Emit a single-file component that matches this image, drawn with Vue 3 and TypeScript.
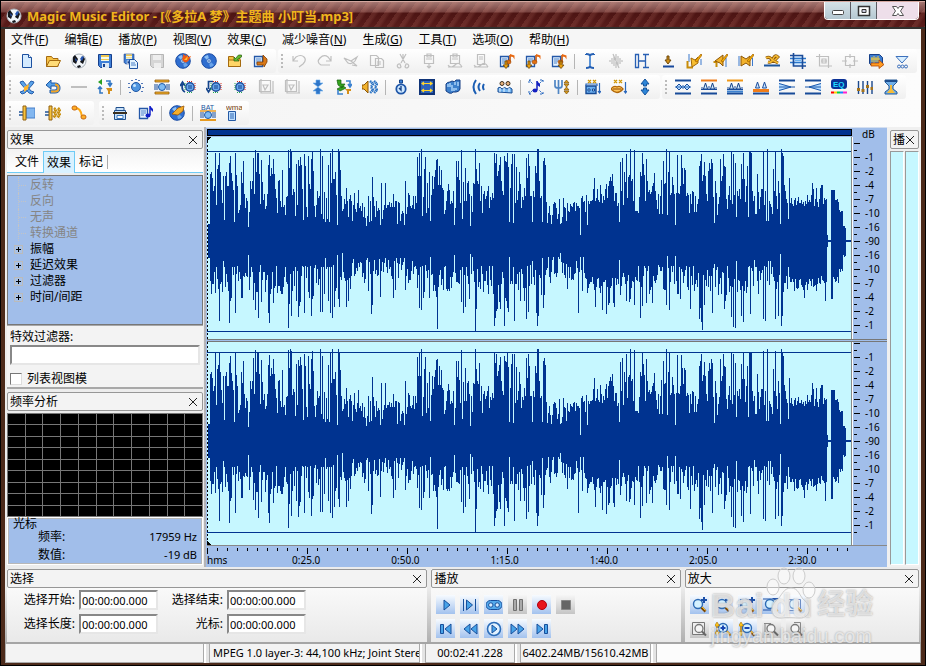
<script setup lang="ts">
import { ref } from 'vue'

type Tool = string

const title = 'Magic Music Editor - [《多拉A 梦》主题曲 小叮当.mp3]'

const menus: [string, string][] = [
  ['文件', 'F'], ['编辑', 'E'], ['播放', 'P'], ['视图', 'V'], ['效果', 'C'],
  ['减少噪音', 'N'], ['生成', 'G'], ['工具', 'T'], ['选项', 'O'], ['帮助', 'H'],
]

const page = '<path d="M3.500 1.500h6l3 3v10h-9z" fill="#d5ebff" stroke="#1c50a0"/>'
const smallPage = '<path d="M1.500 3.500h8v10h-8z" fill="#e6f3ff" stroke="#2458a8" stroke-width="1.300"/><path d="M3 6h5M3 8h5M3 10h3" stroke="#4a80c8"/>'
const note = '<path d="M11 2v7" stroke="#b84800" stroke-width="1.500"/><path d="M11 1l4.500 1.500v4L14 4l-3-.5z" fill="#e86810"/><ellipse cx="9.500" cy="9" rx="2.500" ry="2" fill="#e07010" stroke="#a04404" stroke-width=".6"/>'
const goldDown = (x: number) => `<path d="M${x - 1} 8v4h-2l3 3.500 3-3.500h-2V8z" fill="#e8a010" stroke="#704808" stroke-width=".8"/>`
const disc = '<circle cx="8" cy="8" r="7.300" fill="#2f6ed0" stroke="#1a4ca4"/><path d="M3 4a6.500 6.500 0 0 1 4-2l1 4-2 1z" fill="#8cc0f4"/><path d="M13 12a6 6 0 0 1-4 2L8 10l2-1z" fill="#6aa4ea"/><circle cx="8" cy="8" r="2.300" fill="#c8e4ff" stroke="#3068c0"/><circle cx="8" cy="8" r=".8" fill="#134090"/>'
const floppy = '<path d="M1.500 1.500h13v13h-11l-2-2z" fill="#3f80d8" stroke="#163f8c"/><path d="M4 2h8v6H4z" fill="#f4fbe8"/><path d="M4 2h8v2H4zM4 6h8v1H4z" fill="#f0c850"/><path d="M5 10h7v5H5z" fill="#dce8f4"/><path d="M6 11h2v3H6z" fill="#163f8c"/>'
const folder = '<path d="M1.500 13.500v-10h5l1.500 2h5v8z" fill="#f6c247" stroke="#a46a10"/>'
const sun = '<circle cx="8" cy="8" r="4.500" fill="#4f96e0" stroke="#1d55a4"/><circle cx="6.500" cy="6.500" r="1.500" fill="#c8e8ff"/>'
const clock = (x: number) => `<circle cx="${x}" cy="8" r="4.200" fill="#6aa9ee" stroke="#1d4c9a" stroke-width="1.400"/><path d="M${x - 5} 4v8M${x - 3} 13.500h6" stroke="#20a850" stroke-dasharray="1 1"/><path d="M${x + 5} 4v8M${x - 3} 2.500h6" stroke="#d83020" stroke-dasharray="1 1"/><path d="M${x - 2} 7h4M${x - 2} 9h4" stroke="#144088"/>`
const band = '<path d="M0 8h4M12 8h4M0 6h4M12 6h4M0 10h4M12 10h4" stroke="#174c9c"/><circle cx="8" cy="8" r="3.500" fill="#7ebbf4" stroke="#1c58a8"/>'
const bars = (a: string, b: string) => `<path d="M0 1.500h16" stroke="${a}" stroke-width="2"/><path d="M0 14.500h16" stroke="${b}" stroke-width="2"/>`
const peaks = '<path d="M2.500 10l2-6 2 6zM9.500 10l2-6 2 6z" fill="#d5ecff" stroke="#123e84"/><path d="M0 10.500h16M1 8v2M8 7v3M15 8v2" stroke="#1a4c9c"/>'
const pencil = '<path d="M9 8l6-7 1 1-5 7z" fill="#f4b000" stroke="#a05c00" stroke-width=".7"/>'
const lens = '<circle cx="7" cy="7" r="4.500" fill="#d5f1ff" stroke="#2c6ab4" stroke-width="1.400"/><path d="M10.500 10.500l4 4" stroke="#7a4604" stroke-width="2.500"/><path d="M11 10l3.500 3.500" stroke="#ffc018"/>'
const greyLens = '<circle cx="8" cy="7.500" r="4" fill="#f5f5f5" stroke="#777" stroke-width="1.300"/><path d="M11 10.500l4 4" stroke="#666" stroke-width="2"/>'
const grey = (d: string) => `<path d="${d}" fill="none" stroke="#bfbfbf" stroke-width="1.200"/>`

const icons: Record<string, string> = {
  new: page + '<path d="M9.500 1.500v3h3" fill="#fff" stroke="#1c50a0"/>',
  open: folder + '<path d="M1.500 13.500l3-6h11l-3 6z" fill="#ffdc78" stroke="#a46a10"/>',
  panda: '<circle cx="8" cy="8" r="7" fill="#f2f6fa" stroke="#a8b0b8"/><path d="M2 4l2-2 3 4-2 5-3-2zM12 3l2 3-2 5-3-2zM6 13l3-1 1 2-3 1z" fill="#15171c"/><path d="M9 6l2-3 2 1-2 4z" fill="#2454b0"/><path d="M4 5l2 2-1 2z" fill="#2c5cbc"/>',
  save: floppy,
  saveall: '<g transform="scale(.75)">' + floppy + '</g><path d="M6.500 6.500h5l3 3v6h-8z" fill="#e1f2ff" stroke="#1c50a0"/><path d="M8 10h4M8 12h5" stroke="#4a80c8"/>',
  saveoff: '<path d="M1.500 1.500h13v13h-11l-2-2z" fill="#d6d6d6" stroke="#b5b5b5"/><path d="M4 2h8v5H4zM5 10h7v5H5z" fill="#eee"/>',
  burn: disc + '<path d="M8 8c-2-3 1-4 0-7l3 2 1-2 1 3 3-1-2 4c-2 3-4 3-6 1z" fill="#f05a14"/><path d="M9 7l4-4-1 4z" fill="#ffc030"/>',
  cd: disc,
  folderin: folder + '<path d="M9 6h4.500v7.500H9z" fill="#f6c247"/><path d="M1.500 7h12v6.500h-12z" fill="#ffd566" stroke="#a46a10"/><path d="M7 8V4l1.500 1.500 3-3.500h3v2l-4 2.500L12 8z" fill="#64ba30" stroke="#286010" stroke-width=".7"/>',
  extract: smallPage + '<path d="M4 9h6V2l4 4v3l-3 5v-2H4z" fill="#d87818" stroke="#844004" stroke-width=".8"/>',
  undo: grey('M2 3v5h5M2 8l3-4q5-3 8 0t-1 7l-4 3'),
  redo: grey('M14 3v5H9M14 8l-3-4Q7 1 3 5t1 7h9'),
  bird: grey('M1 5l7 3 6-4-2 4q-3 4-7 2zM8 8l6 5-5-1'),
  copy: grey('M1.500 2.500h6l2 2v8h-8zM6.500 5.500h6l2 2v7h-8zM8 9h4M8 11h4'),
  cut: grey('M5 1l5 9M11 1l-5 9M8 1v7M5 11a2 2 0 1 0 1 3zM11 11a2 2 0 1 1-1 3z'),
  paste: grey('M3.500 2.500h9v8h-9zM6 1h4v3H6zM5 6h6M8 10v5M6 13l2 2 2-2'),
  pastemix: grey('M3.500 2.500h9v8h-9zM6 1h4v3H6zM5 6h6M1 12q3 4 7 0t7 2M1 14h14'),
  pastenew: grey('M4.500 1.500h7v10h-7zM6 4h4M6 6h4M1 12q3 4 7 0t7 2M1 14h14'),
  noteA: smallPage + note + goldDown(7),
  noteB: smallPage + note + goldDown(4),
  noteC: smallPage + note + goldDown(10),
  ibeam: '<path d="M4 1q4 0 4 2v10q0 2-4 2M12 1q-4 0-4 2v10q0 2 4 2M4 1v1M12 1v1" fill="none" stroke="#2560b4" stroke-width="2"/><path d="M8 3v10" stroke="#8ec4f8"/>',
  waveoff: grey('M8 1v14M6 3v10M10 3v10M4 5v6M12 5v6M2 7v2M14 7v2M5 1l6 14'),
  range: '<path d="M1.500 1.500h3v13h-3zM11.500 2v12M9 1.500h6M9 14.500h6M5 8h6" fill="none" stroke="#2860b4" stroke-width="1.300"/>',
  tobase: '<path d="M7 3v4H5l3 4 3-4H9V3z" fill="#d09018" stroke="#704808"/><path d="M3 13.500h11" stroke="#17489c" stroke-width="2"/>',
  trimA: '<path d="M3 1v8M15 6v6" stroke="#3b78cc"/><path d="M1.500 8v6.500H7" fill="none" stroke="#c88c08" stroke-width="2"/><path d="M5 5l4 2 3-3v6l-6 4z" fill="#f8be30" stroke="#a06808"/>' + pencil,
  trimB: '<path d="M14 5v9" stroke="#3b78cc"/><path d="M1.500 9h3v5" fill="none" stroke="#c88c08" stroke-width="2"/><path d="M3 8l4-3 4-3v11l-3-3z" fill="#f2b22c" stroke="#8c5606"/>' + pencil,
  trimC: '<path d="M1 3v10M14.500 5v8" stroke="#3b78cc"/><path d="M3 3l5 3 4-3v10l-4-3-5 3z" fill="#f2b22c" stroke="#8c5606"/>' + pencil,
  smooth: '<path d="M2 5q4-2 6 2l6 3M4 9q4 1 5-3 2-5 5-2l-3 3" fill="none" stroke="#8a560c" stroke-width="3"/><path d="M2 5q4-2 6 2l6 3M4 9q4 1 5-3 2-5 5-2l-3 3" fill="none" stroke="#f4ba30" stroke-width="1.500"/><path d="M0 12.500h16" stroke="#1c559c" stroke-width="2"/>',
  crop: '<path d="M2 3h11v10H2z" fill="#d5ebff"/><path d="M0 5.500h16M0 9.500h16" stroke="#2a76ca" stroke-width="1.500"/><path d="M3.500 0v13H16M12.500 16V2.500H0" fill="none" stroke="#1c4c98" stroke-width="1.600"/><path d="M5 7.500h6" stroke="#68b0f0"/>',
  cropoff: grey('M3.500 1v12H16M12.500 15V3.500H0M6 6h4v4H6zM5 8h6'),
  boxoff: grey('M3.500 3.500h9v9h-9zM0 8h5M11 8h5M8 1v4M8 11v4'),
  send: '<path d="M1.500 1.500h10l3 3v8h-11l-2-2z" fill="#3c7cd0" stroke="#174088"/><path d="M4 4v5M6 3v7M8 4v5M10 3v6M3 6h9" stroke="#f8cc38"/><path d="M3 10h8V7l5 4.500-5 4V13H3z" fill="#ff9b20" stroke="#b04808" stroke-width=".8"/>',
  filter: '<path d="M2 3.500h12L8 10z" fill="#d9efff" stroke="#3c70bc"/><circle cx="5" cy="13.500" r="1.500" fill="none" stroke="#3c70bc"/><circle cx="8.500" cy="13.500" r="1.500" fill="none" stroke="#3c70bc"/><circle cx="12" cy="13.500" r="1.500" fill="none" stroke="#3c70bc"/>',
  cross: '<path d="M1 3l3-1 8 10 3 1-2 2-3-1L2 5zM15 3l-3-1L4 12l-3 1 2 2 3-1 8-9z" fill="#5aa3ea" stroke="#1c54a4" stroke-width=".9"/><path d="M5 8l5-3-1 5-4 3z" fill="#ffb42c"/>',
  turn: '<path d="M1 6l5-5v3h4q5 0 5 5t-5 5H5v-3h5q2 0 2-2t-2-2H6v3z" fill="#55a0e8" stroke="#1f58a4"/><path d="M10 5.500q3.500 0 3.500 3.500t-3.500 3.500H6" fill="none" stroke="#f4a423" stroke-width="2"/>',
  dash: '<path d="M0 8h16" stroke="#bfbfbf" stroke-width="2"/>',
  swap: '<path d="M1 3l4-3v6z" fill="#28a020"/><path d="M9 2h4v3M11 4l2 3 2-3" fill="none" stroke="#3478c4" stroke-width="1.600"/><path d="M3 9v5h3M1 10l2-2 2 2" fill="none" stroke="#3478c4" stroke-width="1.600"/><path d="M9 9h6v3h-2v3h-2v-3z" fill="#d48e18"/>',
  burst: sun + '<path d="M1 4v1M4 1v1M11 1v1M14 4v1M15 8v1M14 12v1M1 8v1M2 13v1M8 0v1" stroke="#1c4fa4" stroke-width="1.500"/>',
  bandgold: '<path d="M1 1h14v2H1zM1 13h14v2H1z" fill="#f4b32e" stroke="#955b08" stroke-width=".8"/>' + band,
  loopup: '<path d="M5 13Q1 11 2.500 5M0 7l2.500-4L5 7" fill="none" stroke="#14448c" stroke-width="1.700"/>' + clock(10),
  loopdn: '<path d="M7 2.500H2.500V10M0 9l2.500 4L5 9" fill="none" stroke="#14448c" stroke-width="1.700"/>' + clock(10),
  gear: clock(8),
  sqoff: grey('M1.500 1.500h11v11h-11zM3 0v14h13M5 6h5l-3 5zM15 2v12'),
  vert: '<path d="M6 1h4v3h3L8 8 3 4h3zM6 15h4v-3h3L8 8l-5 4h3z" fill="#2e75c8" stroke="#6fb0ec" stroke-width=".6"/>',
  swap2: '<path d="M1 1h4v4h4l-3 4-4-3zM1 10l6-3 3 2-6 3z" fill="#36a420" stroke="#156010" stroke-width=".7"/><path d="M10 2h4v5M12 5l2 3 2-3M2 11v4h5" fill="none" stroke="#3b82d0" stroke-width="1.600"/><path d="M9 10h6v2h-2v3h-2v-3z" fill="#d48e18"/>',
  speakwave: '<path d="M0 6h2l4-4v12l-4-4H0z" fill="#f2b22c" stroke="#8c5606"/><path d="M8 2l3 3-2 3 2 3-3 3M12 2l3 3-2 3 2 3-3 3" fill="none" stroke="#2c74c4" stroke-width="2.500" stroke-dasharray="1.500 .5"/>',
  watch: '<circle cx="8" cy="10" r="4.700" fill="#cfe8ff" stroke="#1d55a8" stroke-width="1.800"/><path d="M6.500 1h3v3h-3z" fill="#3d82d8" stroke="#174488"/><path d="M8 7v4l-2-2" fill="none" stroke="#174488" stroke-width="1.400"/>',
  stretch: '<path d="M1 1h14v14H1z" fill="#2c62bc" stroke="#103478" stroke-width="2"/><path d="M4 4.500h9M4 11.500h9M5 3L3 4.500 5 6M11 3l2 1.500L11 6M5 10l-2 1.500L5 13M11 10l2 1.500-2 1.500" fill="none" stroke="#ffd52c" stroke-width="1.200"/>',
  chorus: '<path d="M1 5q1-2 4-2l2-1q3 2 4-1h4v9q-1 3-4 3H8q-1 2-4 1l-3-2z" fill="#3c80cc" stroke="#173f84"/><path d="M3 5v3M5 4v4M9 9v3M11 9v2M10 3v3M13 3v4M7 6v6" stroke="#b9deff" stroke-width="1.300"/>',
  echo: '<path d="M5 1Q0 8 5 15M9 4q-3 4 0 8M13 5q-2 3 0 6" fill="none" stroke="#1b5eb4" stroke-width="2"/>',
  crowd: '<circle cx="5" cy="4.500" r="2" fill="#e8b27c" stroke="#3e3020"/><circle cx="11" cy="4.500" r="2" fill="#e8b27c" stroke="#3e3020"/><path d="M1 13V9q2-2 4 1 3-3 5 0 3-3 5 0v4z" fill="#76b7f2" stroke="#174c94"/><path d="M3 9v4M7 9v4M12 9v4" stroke="#e8f5ff"/>',
  notefit: '<path d="M1 4V1h3M12 1h3v3M1 12v3h3M12 15h3v-3M1 1l4 4M15 1l-4 4M1 15l4-4M15 15l-4-4" fill="none" stroke="#2868c0" stroke-dasharray="2 1"/><path d="M9 2v9" stroke="#1420c0" stroke-width="1.500"/><path d="M9 2l3 3v3L9 6z" fill="#1420c0"/><ellipse cx="7" cy="11.500" rx="2.500" ry="2" fill="#1420c0"/>',
  fork: '<path d="M1 1v6q0 2 3.500 2T8 7V1M4.500 1v14" fill="none" stroke="#5086c4" stroke-width="1.700"/><path d="M10 4h5l-2.500-3zM10 5h5l-2.500 3zM10 11h5l-2.500-3zM10 12h5l-2.500 3z" fill="#e0a21c" stroke="#7c5008" stroke-width=".7"/>',
  radio: '<path d="M1 7h10v7.500H1z" fill="#6db0f0" stroke="#164a94" stroke-width="1.400"/><path d="M3 10h2v2H3zM7.500 10h2v2h-2z" fill="#e8f7ff" stroke="#164a94"/><path d="M1 7V5h11v2M14.500 4v9M13 12l1.500 2 1.500-2" fill="none" stroke="#2b68bc" stroke-width="1.200"/><path d="M3 1l3 3M6 1L3 4M8 1l3 3M11 1L8 4" fill="none" stroke="#d09808" stroke-width="1.300"/>',
  lips: '<path d="M0 10q3-4 6-2 3-2 6 2-6 7-12 0z" fill="#ffc457" stroke="#b0680c" stroke-width="1.300"/><path d="M2 10h8" stroke="#8d4808"/><path d="M14.500 3v10M13 12l1.500 2 1.500-2" fill="none" stroke="#2b68bc" stroke-width="1.200"/><path d="M3 1l3 3M6 1L3 4M8 1l3 3M11 1L8 4" fill="none" stroke="#d09808" stroke-width="1.300"/>',
  updown: '<path d="M8 0l4 5H9.500v2h-3V5H4zM8 16l4-5H9.500V9h-3v2H4z" fill="#2d85d8" stroke="#17549c"/>',
  wdiamond: bars('#174a98', '#174a98') + '<path d="M1 8l3-3 3 3-3 3zM9 8l3-3 3 3-3 3z" fill="#b5dbff" stroke="#1b4d9c"/><path d="M0 8h16M8 6v4" stroke="#2b69b8"/>',
  wtop: bars('#f07c18', '#174a98') + peaks,
  wmid: bars('#f09818', '#174a98') + peaks + '<path d="M0 12.500h16" stroke="#3e82d0" stroke-width="2"/>',
  wlow: '<path d="M0 14.500h16" stroke="#174a98" stroke-width="2"/><path d="M0 11.500h16" stroke="#f07c18" stroke-width="3"/><path d="M2.500 9l2-6 2 6zM9.500 9l2-6 2 6z" fill="#d0e8ff" stroke="#1a4c9c"/>',
  fadeout: bars('#174a98', '#174a98') + '<path d="M0 4l12 4-12 4z" fill="#b5dbff"/><path d="M0 4.500l12 3.500-12 3.500M0 8h16" fill="none" stroke="#1b58ac"/>',
  fadein: bars('#174a98', '#174a98') + '<path d="M16 4L4 8l12 4z" fill="#b5dbff"/><path d="M16 4.500L4 8l12 3.500M16 8H0" fill="none" stroke="#1b58ac"/>',
  eq: '<rect x="0" y="0" width="16" height="10" rx="3" fill="#0b3296"/><text x="2" y="8" font-family="Liberation Sans" font-size="8" font-weight="700" fill="#21dcff">EQ</text><path d="M0 13.500h3" stroke="red" stroke-width="2"/><path d="M3 13.500h3" stroke="#fc0" stroke-width="2"/><path d="M6 13.500h3" stroke="#0c4" stroke-width="2"/><path d="M9 13.500h3" stroke="#18f" stroke-width="2"/><path d="M12 13.500h4" stroke="#f2c" stroke-width="2"/>',
  sliders: '<path d="M1.500 2v13M6 2v13M10.500 2v13M15 2v13" stroke="#1b488c" stroke-width="1.400"/><path d="M0 9h3v3H0zM4.500 10h3v3h-3zM9 6h3v3H9zM13.500 8H16v3h-2.500z" fill="#a4731c"/>',
  hour: '<path d="M2 1h12v2l-4 4v3l4 3v2H2v-2l4-3V7L2 3z" fill="#70afe8" stroke="#285c98"/><path d="M7 6h2v4l3 4H4l3-4z" fill="#f6bc38"/><path d="M2 2h12" stroke="#1c4c8c" stroke-width="2"/>',
  insertA: '<path d="M7 3h9v10H7z" fill="#83b7f0" stroke="#477fc8"/><path d="M0 7h4M0 10h4" stroke="#205498" stroke-width="1.500"/><path d="M4 1h3v14H4z" fill="#f7c33c" stroke="#916010"/>',
  insertB: '<path d="M9 3l2 2-2 2 2 2-2 2 2 2M13 3l2 2-2 2 2 2-2 2 2 2" fill="none" stroke="#c89010" stroke-width="2.500" stroke-dasharray="2 .8"/><path d="M0 7h4M0 10h4" stroke="#205498" stroke-width="1.500"/><path d="M4 1h3v14H4z" fill="#f7c33c" stroke="#916010"/>',
  curve: '<path d="M3 3q7-1 8 9" fill="none" stroke="#ffab16" stroke-width="2"/><rect x="1" y="1" width="5" height="4" rx="2" fill="#ffae26" stroke="#c56812"/><rect x="10" y="10" width="5" height="4" rx="2" fill="#ffae26" stroke="#c56812"/>',
  case: '<path d="M4 6V2.500h8V6M2.500 5.500h11v9h-11z" fill="#c9e2fa" stroke="#1f4f8c"/><path d="M1 8h14" stroke="#3d3120" stroke-width="2"/><path d="M5 10.500h6v3H5z" fill="#fff" stroke="#3a77bd"/>',
  pagenote: smallPage + '<path d="M12 1v9" stroke="#111fc8" stroke-width="1.500"/><path d="M12 1l3 3v3l-3-3z" fill="#111fc8"/><ellipse cx="10" cy="10.500" rx="2.500" ry="2" fill="#111fc8"/>',
  discedit: disc + '<path d="M3 9l6-6 6-2-1 5-5 4z" fill="#f6ae2a" stroke="#9a5808" stroke-width=".8"/>',
  bat: '<text x="1" y="5" font-family="Liberation Sans" font-size="7" fill="#20539c">BAT</text><path d="M0 6h16" stroke="#e89b20" stroke-width="1.500"/><g transform="translate(0 2)">' + band + '</g><path d="M0 15h16" stroke="#e89b20" stroke-width="2"/>',
  wma: '<path d="M2.500 6.500h7v9h-7z" fill="#bfdfff" stroke="#2459a4"/><path d="M4 9h4M4 11h4M4 13h4" stroke="#2b65b2"/><text x="0" y="5" font-family="Liberation Sans" font-size="8" fill="#77430c">wma</text>',
}

const toolbars: { wide?: boolean; groups: Tool[][] }[] = [
  { groups: [
    'new open panda save saveall saveoff burn cd folderin extract'.split(' '),
    'undo redo bird copy cut paste pastemix pastenew noteA noteB noteC | ibeam waveoff range tobase trimA trimB trimC smooth crop cropoff boxoff send filter'.split(' '),
  ] },
  { groups: [
    'cross turn dash swap | burst bandgold loopup loopdn gear sqoff sqoff vert swap2 speakwave | watch stretch chorus echo crowd | notefit fork | radio lips updown'.split(' '),
    'wdiamond wtop wmid wlow fadeout fadein eq sliders hour'.split(' '),
  ] },
  { wide: true, groups: [
    'insertA insertB curve'.split(' '),
    'case pagenote | discedit | bat wma'.split(' '),
  ] },
]

const tree: { label: string; branch: boolean }[] = [
  { label: '反转', branch: false }, { label: '反向', branch: false },
  { label: '无声', branch: false }, { label: '转换通道', branch: false },
  { label: '振幅', branch: true }, { label: '延迟效果', branch: true },
  { label: '过滤器', branch: true }, { label: '时间/间距', branch: true },
]

const blue = (d: string) => `<path d="${d}" fill="#48a3e8" stroke="#174f9c"/>`
const playRows: { name: string; off?: boolean; art: string }[][] = [
  [
    { name: '播放', art: blue('M6 3l6 5-6 5z') },
    { name: '播放选区', art: blue('M1.500 2v12M4.500 3l6 5-6 5zM13.500 2v12') },
    { name: '循环', art: '<rect x="0" y="3.500" width="16" height="9" rx="4.500" fill="#55aaec" stroke="#174f9c"/><circle cx="4.800" cy="8" r="2.200" fill="#d7edff" stroke="#174f9c"/><circle cx="11.200" cy="8" r="2.200" fill="#d7edff" stroke="#174f9c"/>' },
    { name: '暂停', off: true, art: '<path d="M3.500 2.500h3v11h-3zM9.500 2.500h3v11h-3z" fill="#aaa" stroke="#707070"/>' },
    { name: '录音', art: '<circle cx="8" cy="8" r="4.500" fill="#e8141c" stroke="#b00010"/>' },
    { name: '停止', off: true, art: '<path d="M3.500 3.500h9v9h-9z" fill="#666" stroke="#888"/>' },
  ],
  [
    { name: '开头', art: blue('M2.500 3.500h3v9h-3zM13 3v10L7 8z') },
    { name: '快退', art: blue('M8 3v10L2 8zM15 3v10L9 8z') },
    { name: '播放全部', art: '<circle cx="8" cy="8" r="6.500" fill="#e2f2ff" stroke="#2b6cb8" stroke-width="1.600"/>' + blue('M6 4l5 4-5 4z') },
    { name: '快进', art: blue('M1 3v10l6-5zM8 3v10l6-5z') },
    { name: '结尾', art: blue('M3 3v10l6-5zM10.500 3.500h3v9h-3z') },
  ],
]

const zoomRows: { name: string; off?: boolean; art: string }[][] = [
  [
    { name: '放大', art: lens + '<path d="M13 0v6M10 3h6" stroke="#1d50a8" stroke-width="2"/>' },
    { name: '缩小', art: lens + '<path d="M10 3h6" stroke="#1d50a8" stroke-width="2"/>' },
    { name: '放大选区', art: '<path d="M1.500 2v11M1 2.500h8" fill="none" stroke="#1d50a8"/>' + lens + '<path d="M13 0v6M10 3h6" stroke="#1d50a8" stroke-width="2"/>' },
    { name: '全部', art: '<path d="M0 2h16M0 13h8" stroke="#1d50a8"/>' + lens + '<path d="M9 1h7l-3.500 3z" fill="#1d50a8"/>' },
    { name: '选区', art: '<path d="M1.500 2.500h12v11h-12z" fill="#d6eaff" stroke="#1d50a8"/>' + lens },
  ],
  [
    { name: '还原', off: true, art: '<path d="M1.500 1.500h12v12h-12z" fill="#eee" stroke="#777"/>' + greyLens },
    { name: '垂直放大', art: '<g transform="translate(1 0)">' + lens + '</g><path d="M8 4.500v5M5.500 7h5" stroke="#1846b4" stroke-width="2"/><path d="M2 1l2.500 4h-2v6h2L2 15l-2.500-4h2V5h-2z" fill="#ffc818" stroke="#a66c08" stroke-width=".6"/>' },
    { name: '垂直缩小', art: '<g transform="translate(1 0)">' + lens + '</g><path d="M5.500 7h5" stroke="#1846b4" stroke-width="2"/><path d="M2 1l2.500 4h-2v6h2L2 15l-2.500-4h2V5h-2z" fill="#ffc818" stroke="#a66c08" stroke-width=".6"/>' },
    { name: '左端', off: true, art: '<path d="M1 2.500h7M1 13.500h5M2 2v11" stroke="#888"/>' + greyLens },
    { name: '右端', off: true, art: '<path d="M7 1.500h6.500v12H7" fill="none" stroke="#888"/>' + greyLens },
  ],
]

const fields = ref([
  { id: 'sel-start', label: '选择开始:', value: '00:00:00.000' },
  { id: 'sel-end', label: '选择结束:', value: '00:00:00.000' },
  { id: 'sel-length', label: '选择长度:', value: '00:00:00.000' },
  { id: 'sel-cursor', label: '光标:', value: '00:00:00.000' },
])
const filterText = ref('')
const listView = ref(false)

/* Peak heights above the centre line, as column:height */
const upper = `3:67 4:69 5:63 6:50 7:55 8:88 9:36 10:72 11:76 12:88 13:69 14:51 15:38 16:65 17:21 18:65 19:69 20:55 21:55 22:78 23:85 24:68 25:60 26:51 27:19 28:88 29:66 30:55 31:28 32:31 33:36 34:69 35:58 36:80 37:47 38:33 39:43 40:40 41:14 43:60 44:52 45:60 46:83 47:47 48:91 49:69 50:88 51:88 52:67 53:37 54:81 55:59 56:41 58:32 59:35 60:47 61:76 62:86 63:65 64:73 65:67 66:82 67:67 68:52 69:43 70:28 71:60 72:61 73:40 74:34 75:71 76:34 77:36 78:26 79:44 80:45 81:91 82:73 83:92 84:90 85:46 86:52 87:49 88:25 89:77 90:36 91:81 92:75 93:84 94:76 95:52 96:21 97:87 98:75 99:34 100:24 101:85 102:57 103:52 104:82 105:90 106:70 107:35 108:24 109:36 110:50 111:43 112:45 113:92 114:27 115:85 116:22 117:49 118:19 119:43 120:22 121:76 122:19 123:88 124:58 125:92 126:62 127:62 128:69 129:46 130:16 131:92 132:89 133:71 134:45 137:42 139:53 142:42 143:46 147:48 151:51 153:35 157:34 161:45 165:64 166:44 174:58 178:58 183:34 186:47 188:40 192:38 195:30 198:60 201:48 202:46 206:45 208:45 210:84 211:65 212:88 213:65 214:92 215:25 217:72 218:84 219:28 220:58 221:33 222:69 223:20 225:65 226:52 227:64 228:71 229:81 230:82 231:56 232:75 233:56 234:71 235:53 236:51 240:50 241:57 242:51 244:40 246:50 247:16 249:80 250:64 251:80 252:61 253:38 254:91 255:22 256:59 257:40 258:73 259:40 260:58 261:60 262:47 263:15 264:45 266:58 267:57 268:92 269:72 270:60 271:57 272:78 273:40 274:55 277:50 278:42 280:50 281:55 285:48 287:88 288:78 289:87 290:65 291:70 292:76 293:84 294:60 295:50 296:46 297:85 298:80 299:79 300:88 301:74 302:19 303:53 304:77 305:87 306:18 307:87 308:38 309:74 310:41 311:50 312:69 313:57 317:53 318:45 319:83 320:63 321:87 322:51 323:75 325:45 326:19 327:50 329:75 330:68 331:92 332:92 333:60 335:45 336:19 337:80 338:83 339:76 340:39 343:35 353:42 357:43 361:38 365:35 367:38 371:35 374:6 375:43 376:45 380:46 384:40 387:52 388:63 389:40 391:52 394:56 397:45 399:52 400:57 402:55 403:60 404:64 405:60 406:67 407:55 409:48 410:48 411:35 413:19 414:79 415:50 416:83 417:36 418:69 419:59 420:87 421:43 422:64 423:66 424:92 425:60 426:62 427:40 428:91 429:30 434:69 435:65 436:88 437:77 438:66 439:40 440:82 441:60 442:49 443:51 446:55 447:58 448:68 449:50 451:32 453:27 454:45 455:61 457:80 458:57 459:58 460:92 461:26 462:69 463:89 464:46 466:64 467:56 469:16 470:48 471:86 472:48 474:55 475:86 476:73 477:57 478:73 479:71 480:45 482:46 484:47 486:50 489:45 493:75 494:80 495:87 496:60 497:66 498:79 499:65 500:47 502:70 503:78 504:72 505:82 506:78 508:18 509:60 510:48 513:44 514:82 515:60 516:65 517:87 518:75 519:74 520:42 523:55 525:89 526:37 527:87 528:46 529:78 530:24 531:50 533:52 535:77 536:62 537:88 538:62 539:39 540:55 541:75 542:24 543:89 544:89 545:88 546:50 548:45 551:67 553:32 555:52 556:52 557:90 558:36 559:50 560:20 561:92 562:20 563:40 567:72 568:50 569:90 570:45 572:60 573:48 574:17 575:92 576:88 577:85 578:56 579:50 580:42 582:22 583:63 592:44 597:39 601:46 605:46 606:58 607:52 610:53 614:53 615:56 616:56 618:43`
/* Peak depths below the centre line, as column:depth */
const lower = `2:52 4:53 5:43 8:52 12:80 13:43 16:20 17:38 18:46 22:82 23:60 24:57 28:72 30:25 34:57 35:57 36:35 41:14 46:59 48:69 51:77 54:61 60:34 61:72 62:82 64:48 66:62 72:45 75:53 81:87 82:63 84:75 87:45 89:60 91:76 92:65 93:61 97:72 98:25 102:57 104:75 105:58 106:55 109:42 113:71 115:71 118:17 121:60 123:72 125:77 127:66 128:50 130:14 131:58 132:66 135:12 139:66 141:60 143:48 157:42 161:50 164:73 165:64 173:56 186:57 188:49 198:49 201:42 210:47 212:67 214:69 216:57 222:57 223:16 229:56 230:88 231:46 242:50 247:14 254:61 256:72 258:66 262:58 263:13 265:16 268:91 269:68 273:48 287:85 288:77 289:70 290:68 292:61 293:68 297:85 298:57 299:60 300:67 301:71 302:16 307:80 313:60 317:60 319:78 321:71 326:20 330:72 331:85 332:75 336:17 337:67 338:54 344:42 354:12 361:48 372:72 374:16 376:50 381:52 389:66 396:69 400:73 402:64 403:62 407:62 408:66 413:19 414:54 420:60 423:61 424:58 428:64 434:77 436:65 440:62 446:62 457:48 460:64 461:15 463:69 469:15 474:58 484:68 493:78 494:67 495:81 496:89 498:64 506:72 508:23 518:68 519:60 525:76 527:86 529:87 530:20 535:75 537:81 544:73 548:19 557:78 559:80 562:20 564:20 569:78 572:75 574:13 575:85 576:75 588:50 598:57 610:50 619:60 621:45`

const columns = 645
const parse = (source: string): Map<number, number> =>
  new Map(source.split(' ').map((pair) => pair.split(':').map(Number) as [number, number]))

function waveform(centre: number): string {
  const up = parse(upper)
  const down = parse(lower)
  let seed = 7
  const random = () => (seed = (seed * 16807) % 2147483647) / 2147483647
  let d = ''
  for (let x = 1; x < columns; x++) {
    const quiet = (x > 134 && x < 209) || (x > 339 && x < 382)
    const rising = x > 381 && x < 412
    const tail = x > 578
    const a = random()
    const b = random()
    let top = up.get(x) ?? (tail ? 34 + a * 9 : rising ? 36 + a * 12 : quiet ? 15 + a * 26 : 26 + a * 24)
    let bottom = down.get(x) ?? (tail ? 35 + b * 14 : rising ? 36 + b * 16 : quiet ? 16 + b * 24 : 24 + b * 30)
    if (top < 28 && !quiet) bottom = Math.min(bottom, 26)
    if (x < 3) top = bottom = 17
    if (x > 620 && x < 625) top = bottom = x < 622 ? 6 : 1
    if (x > 624) {
      const fade = x < 633 ? 1 : x < 637 ? 0.75 : x < 640 ? 0.35 : 0
      top = fade * (x < 629 ? 50 : 34 + a * 8) + 1
      bottom = fade * (x < 627 ? 57 : 34 + b * 8) + 1
    }
    d += `M${x} ${centre - Math.round(top)}h1V${centre + Math.round(bottom)}h-1z`
  }
  return d
}

const channels = [
  { id: 'left', height: 202, centre: 104, ceiling: 14, floor: 194, start: 6 },
  { id: 'right', height: 203, centre: 99, ceiling: 10, floor: 190, start: 1 },
].map((c) => ({
  ...c,
  wave: waveform(c.centre),
  ticks: Array.from({ length: 28 }, (_, i) => `M0 ${c.start + i * 7}h${i % 2 ? 3 : 6}v1H0z`).join(''),
}))
const levels = [-1, -2, -4, -7, -10, -16, -90, -16, -10, -7, -4, -2, -1]

const timeTicks = Array.from({ length: 65 }, (_, i) => `M${i * 10} 2h1v${i % 10 ? 3 : 6}h-1z`).join('')
const times = ['0:25.0', '0:50.0', '1:15.0', '1:40.0', '2:05.0', '2:30.0']
</script>

<template>
  <div class="window">
    <header class="titlebar">
      <svg class="logo" viewBox="0 0 16 16" v-html="icons.panda"></svg>
      <h1>{{ title }}</h1>
      <div class="controls">
        <button type="button" aria-label="最小化"><svg viewBox="0 0 14 12"><rect x="1.500" y="5.500" width="11" height="4" rx="1" fill="#fff" stroke="#444" /></svg></button>
        <button type="button" aria-label="最大化"><svg viewBox="0 0 14 12"><path d="M1.500 1.500h11v9h-11z" fill="#fff" stroke="#333" stroke-width="1.500" /><path d="M5 4.500h4v3H5z" fill="#ccd" stroke="#333" /></svg></button>
        <button type="button" class="close" aria-label="关闭"><svg viewBox="0 0 14 12"><path d="M1.500 1.500h4L7 3.500l1.500-2h4L9.500 6l3 4.500h-4L7 8.500l-1.500 2h-4l3-4.500z" fill="#fff" stroke="#555" /></svg></button>
      </div>
    </header>

    <nav class="menubar">
      <button v-for="[name, key] in menus" :key="key" type="button">{{ name }}(<u>{{ key }}</u>)</button>
    </nav>

    <div class="toolbars">
      <div v-for="(bar, r) in toolbars" :key="r" class="bar" :class="{ wide: bar.wide }">
        <div v-for="(group, g) in bar.groups" :key="g" class="group">
          <i class="grip"></i>
          <template v-for="(tool, t) in group" :key="t">
            <i v-if="tool === '|'" class="sep"></i>
            <button v-else type="button" class="tool" :aria-label="tool">
              <svg viewBox="0 0 16 16" v-html="icons[tool]"></svg>
            </button>
          </template>
        </div>
      </div>
    </div>

    <main class="workspace">
      <aside class="side">
        <div class="head"><span>效果</span><button type="button" aria-label="关闭效果"></button></div>
        <div class="tabs">
          <button type="button">文件</button>
          <button type="button" class="active">效果</button>
          <button type="button">标记</button>
          <i></i>
        </div>
        <ul class="tree">
          <li v-for="node in tree" :key="node.label" :class="{ branch: node.branch }">
            <i></i><span>{{ node.label }}</span>
          </li>
        </ul>
        <div class="filter">
          <label for="fx-filter">特效过滤器:</label>
          <input id="fx-filter" v-model="filterText" type="text" />
          <label class="check"><input v-model="listView" type="checkbox" />列表视图模</label>
        </div>
        <div class="head second"><span>频率分析</span><button type="button" aria-label="关闭频率分析"></button></div>
        <div class="spectrum"><i v-for="n in 99" :key="n"></i></div>
        <fieldset class="cursor">
          <legend>光标</legend>
          <dl><dt>频率:</dt><dd>17959 Hz</dd><dt>数值:</dt><dd>-19 dB</dd></dl>
        </fieldset>
      </aside>

      <section class="editor">
        <div class="top"><div class="overview"></div><span>dB</span></div>
        <div v-for="c in channels" :key="c.id" class="channel" :class="c.id">
          <svg class="wave" :viewBox="`0 0 645 ${c.height}`" preserveAspectRatio="none" shape-rendering="crispEdges">
            <path :d="`M0 ${c.ceiling}h645v1H0zM0 ${c.floor}h645v1H0z`" fill="#003390" />
            <path :d="c.wave" fill="#003390" />
            <path :d="`M.5 0v${c.height}`" stroke="#000" stroke-dasharray="2 2" />
            <path :d="c.id === 'left' ? 'M0 0h5L0 5z' : 'M0 203h5l-5-5z'" fill="#000" />
          </svg>
          <div class="scale">
            <svg :viewBox="`0 0 6 ${c.height}`" preserveAspectRatio="none" shape-rendering="crispEdges"><path :d="c.ticks" /></svg>
            <ol><li v-for="(level, i) in levels" :key="i">{{ level }}</li></ol>
          </div>
        </div>
        <div class="ruler">
          <svg viewBox="0 0 645 9" preserveAspectRatio="none" shape-rendering="crispEdges"><path :d="timeTicks" /></svg>
          <div class="times"><span>hms</span><span v-for="time in times" :key="time">{{ time }}</span></div>
        </div>
      </section>

      <aside class="meters">
        <div class="head"><span>播</span><button type="button" aria-label="关闭电平"></button></div>
        <div class="levels"><i></i><i></i></div>
      </aside>
    </main>

    <section class="dock">
      <div class="panel">
        <div class="head"><span>选择</span><button type="button" aria-label="关闭选择"></button></div>
        <form class="fields">
          <template v-for="field in fields" :key="field.id">
            <label :for="field.id">{{ field.label }}</label>
            <input :id="field.id" v-model="field.value" type="text" />
          </template>
        </form>
      </div>
      <div class="panel">
        <div class="head"><span>播放</span><button type="button" aria-label="关闭播放"></button></div>
        <div class="pads">
          <div v-for="(row, r) in playRows" :key="r">
            <button v-for="b in row" :key="b.name" type="button" :class="{ off: b.off }" :aria-label="b.name"><svg viewBox="0 0 16 16" v-html="b.art"></svg></button>
          </div>
        </div>
      </div>
      <div class="panel">
        <div class="head"><span>放大</span><button type="button" aria-label="关闭放大"></button></div>
        <div class="pads">
          <div v-for="(row, r) in zoomRows" :key="r">
            <button v-for="b in row" :key="b.name" type="button" :class="{ off: b.off }" :aria-label="b.name"><svg viewBox="0 0 16 16" v-html="b.art"></svg></button>
          </div>
        </div>
        <div class="brand">
          <svg viewBox="0 0 50 54">
            <ellipse cx="18" cy="9" rx="6" ry="8" /><ellipse cx="33" cy="9" rx="6" ry="8" />
            <ellipse cx="7" cy="20" rx="6" ry="8" /><ellipse cx="43" cy="23" rx="6" ry="8" />
            <path d="M25 21c8 0 8 8 14 13 7 6 5 17-5 17-5 0-13-1-18 0-11 1-13-11-6-17 6-5 7-13 15-13z" />
          </svg>
          <div class="name"><b>Bai</b><b class="du">du</b><b class="cn">经验</b></div>
          <div class="site">jingyan.baidu.com</div>
        </div>
      </div>
    </section>

    <footer class="status">
      <span class="hint"></span><i></i>
      <span class="format">MPEG 1.0 layer-3: 44,100 kHz; Joint Stereo</span><i></i>
      <span class="length">00:02:41.228</span><i></i>
      <span class="disk">6402.24MB/15610.42MB</span><i></i>
      <span class="rest"></span>
    </footer>
  </div>
</template>

<style>
body { margin: 0; }
</style>

<style scoped>
* { box-sizing: border-box; }
button, input { font: inherit; color: inherit; margin: 0; padding: 0; border: 0; background: none; border-radius: 0; }
ul, ol, dl, dd { margin: 0; padding: 0; list-style: none; }
svg { display: block; }
.window {
  min-height: 100vh; display: flex; flex-direction: column;
  border: 1px solid #000; padding: 0 4px 2px; background: #4c2a1a;
  font-family: "Noto Sans", "Noto Sans CJK SC", sans-serif; font-size: 12px; line-height: 16px; color: #000;
}
.titlebar {
  display: flex; align-items: flex-start; height: 28px; margin: 0 -4px; padding: 0 6px 0 5px;
  border-top: 1px solid #d4a8a0; border-bottom: 2px solid #32302e;
  background:
    repeating-linear-gradient(125deg, rgba(255,170,150,.12) 0 3px, transparent 6px 10px),
    linear-gradient(#a27570 0, #78423f 10px, #4c1413 11px, #5a1d1b 100%);
}
.logo { width: 16px; height: 16px; margin-top: 6px; }
h1 { flex: 1; margin: 5px 0 0 5px; font-size: 13px; line-height: 18px; font-weight: 700; color: #f0b51c; white-space: nowrap; }
.controls { display: flex; width: 95px; height: 18px; border: 1px solid #fff; border-top: 0; border-radius: 0 0 4px 4px; overflow: hidden; }
.controls button { flex: 26; display: grid; place-items: center; background: linear-gradient(#d5e2e8, #b5c8d1); border-right: 1px solid #5b5b62; }
.controls .close { flex: 42; border-right: 0; background: #eedfea; }
.controls svg { width: 14px; height: 12px; }
.menubar { display: flex; gap: 16px; height: 20px; padding: 1px 0 0 6px; background: #f6f6f6; }
.menubar button { line-height: 19px; white-space: nowrap; }
.toolbars { display: flex; flex-direction: column; gap: 2px; height: 78px; padding: 0 1px; background: linear-gradient(90deg, #f3f3f3, #fcfcfc); }
.bar { display: flex; gap: 2px; }
.bar.wide { gap: 5px; }
.group { display: flex; align-items: center; height: 24px; padding: 0 2px 0 3px; border-radius: 3px; background: linear-gradient(#fff, #f0f0f0); }
.grip { width: 2px; height: 14px; margin-right: 3px; background: repeating-linear-gradient(#bbb 0 2px, transparent 2px 4px); }
.sep { width: 1px; height: 15px; margin: 0 2px; background: #b5b5b5; }
.tool { width: 26px; height: 24px; display: grid; place-items: center; }
.tool svg { width: 16px; height: 16px; }

.workspace { flex: 1; display: grid; grid-template-columns: 201px 1fr 34px; background: #ececec; }
.head {
  display: flex; justify-content: space-between; align-items: center; height: 19px; padding: 0 5px 0 2px;
  border: 1px solid #969696; border-radius: 2px; background: #f3f3f3; white-space: nowrap;
}
.head button {
  width: 8px; height: 8px;
  background:
    linear-gradient(45deg, transparent 45%, #222 46% 54%, transparent 55%),
    linear-gradient(-45deg, transparent 45%, #222 46% 54%, transparent 55%);
}
.side { display: flex; flex-direction: column; padding: 3px 1px 2px 2px; border-right: 2px solid #b4b4b8; }
.tabs { display: flex; height: 24px; padding: 2px 0 0 4px; border-bottom: 1px solid #6fcbf5; background: linear-gradient(#f3f3f3, #fff); }
.tabs button { width: 32px; line-height: 20px; }
.tabs .active { margin-bottom: -1px; border: 1px solid #6fcbf5; border-bottom: 0; background: #d8f1ff; }
.tabs i { width: 1px; height: 14px; margin-top: 4px; background: #aaa; }
.tree { flex: 1; margin-top: 2px; padding: 1px 0 0 6px; border: 1px solid #777; background: #a1beea; }
.tree li { display: flex; align-items: center; height: 16px; color: #858585; }
.tree i { width: 8px; height: 16px; margin: 0 4px; border-left: 1px dotted #c4c4c4; background: linear-gradient(90deg, #c4c4c4 50%, transparent 50%) 0 8px / 2px 1px repeat-x; }
.tree .branch { color: #000; }
.tree .branch i {
  width: 9px; height: 9px; margin: 0 7px 0 0; border: 1px solid #bbb;
  background: linear-gradient(#000, #000) center / 5px 1px no-repeat, linear-gradient(#000, #000) center / 1px 5px no-repeat, #a8c2e8;
}
.tree span { white-space: nowrap; }
.filter { display: flex; flex-direction: column; height: 64px; padding: 3px 3px 0; border: solid #a8a8a8; border-width: 1px 0 2px; background: #f3f3f3; }
input[type="text"] { height: 20px; padding: 0 0 0 1px; border: 2px solid; border-color: #888 #e6e6e6 #e6e6e6 #888; background: #fff; font-size: 11px; }
.check { display: flex; align-items: center; gap: 5px; margin-top: 6px; }
.check input { appearance: none; width: 12px; height: 12px; border: 1px solid; border-color: #777 #ddd #ddd #777; background: #fff; }
.second { margin: 3px 0 2px; flex: none; }
.spectrum { display: grid; grid-template-columns: repeat(11, 1fr); grid-template-rows: repeat(9, 1fr); gap: 1px; height: 104px; padding: 1px; background: #777; }
.spectrum i { background: #000; }
.cursor { min-width: 0; height: 48px; margin: 0; padding: 0 6px; border: 0; background: #a1beea; box-shadow: inset 0 0 0 1px #fff, inset 0 0 0 2px #b8b8b8; }
.cursor legend { float: left; width: 100%; height: 11px; padding: 0; line-height: 14px; }
.cursor dl { clear: both; display: grid; grid-template-columns: 1fr 1fr; padding-left: 25px; line-height: 18px; }
.cursor dd { text-align: right; font-size: 11px; }

.editor { display: flex; flex-direction: column; padding-left: 1px; background: #a1beea; border-top: 1px solid #d4dff0; min-width: 0; }
.top { display: grid; grid-template-columns: 1fr 35px; height: 9px; padding-top: 1px; }
.overview { height: 7px; background: #003390; border: 1px solid #000; }
.top span { padding-left: 10px; font-size: 10px; line-height: 10px; }
.channel { display: grid; grid-template-columns: 1fr 35px; min-height: 0; }
.channel.left { flex: 202 1 0; border-bottom: 3px double #777; }
.channel.right { flex: 203 1 0; }
.wave { width: 100%; height: 100%; min-height: 0; background: #c6f7ff; border-right: 1px solid #888; }
.scale { display: flex; gap: 5px; padding-left: 1px; min-height: 0; border-left: 1px solid #fff; }
.scale svg { width: 6px; height: 100%; }
.scale ol { display: flex; flex-direction: column; flex: 1; min-height: 0; font-size: 10px; line-height: 14px; }
.left ol { padding: 13px 0 7px; }
.right ol { padding: 8px 0 13px; }
.scale li { flex: 1; }
.ruler { height: 22px; padding-right: 35px; border-top: 1px solid #888; }
.ruler svg { width: 100%; height: 9px; }
.times { display: grid; grid-template-columns: 50fr repeat(6, 100fr); line-height: 10px; font-size: 10px; text-align: center; }
.times span:first-child { text-align: left; }
.meters { display: flex; flex-direction: column; gap: 2px; padding: 3px 2px 2px 3px; background: #f0f0f0; }
.meters .head { padding: 0 4px 0 2px; overflow: hidden; }
.levels { flex: 1; display: grid; grid-template-columns: 1fr 1fr; gap: 1px; }
.levels i { background: #c6f7ff; border: 1px solid; border-color: #999 #fff #fff #999; }

.dock { display: grid; grid-template-columns: 420fr 249fr 234fr; gap: 4px; height: 77px; padding: 2px 2px 0; border-bottom: 2px solid #a5a5a5; background: linear-gradient(#ececec 20px, #b0b0b0); }
.panel { position: relative; min-width: 0; background: linear-gradient(#fff, #e9e9e9); }
.fields { display: grid; grid-template-columns: 68px 79px 61px 79px; column-gap: 4px; row-gap: 4px; padding-top: 2px; align-items: center; }
.fields label { text-align: right; white-space: nowrap; }
.fields input { width: 79px; }
.pads { display: flex; flex-direction: column; gap: 5px; padding: 7px 5px 0; }
.pads div { display: flex; gap: 5px; }
.pads button { width: 19px; height: 19px; display: grid; place-items: center; background: linear-gradient(#f7fbff, #a3c2ee); }
.pads button.off { background: linear-gradient(#f6f6f6, #c5c5c5); }
.pads svg { width: 16px; height: 16px; }
.status { display: flex; height: 19px; background: #f3f3f3; line-height: 17px; font-size: 11px; }
.status span { border: 1px solid #aaa; border-width: 0 1px 1px; overflow: hidden; white-space: nowrap; }
.status i { width: 5px; border-left: 2px solid #fff; background: #e4e4e4; }
.hint { width: 199px; }
.format { width: 211px; padding-left: 3px; }
.length { width: 90px; text-align: center; }
.disk { width: 131px; text-align: center; }
.rest { flex: 1; background: #fcfcfc; }

/* Logo laid over the zoom panel */
.brand {
  position: absolute; left: 26px; top: 0; width: 176px; padding-top: 16px; pointer-events: none;
  font-family: "Liberation Sans", "Noto Sans CJK SC", sans-serif; color: rgba(255,255,255,.65); text-shadow: 0 0 2px #999;
}
.brand svg { position: absolute; left: 55px; top: -2px; width: 50px; height: 54px; fill: rgba(255,255,255,.35); stroke: #ccc; }
.brand .name { display: flex; align-items: center; height: 40px; font-size: 34px; line-height: 40px; }
.brand .du { margin-left: 7px; }
.brand .cn { margin-left: 5px; font-size: 28px; }
.brand .site { margin-top: 1px; font-size: 20px; line-height: 20px; }
</style>
